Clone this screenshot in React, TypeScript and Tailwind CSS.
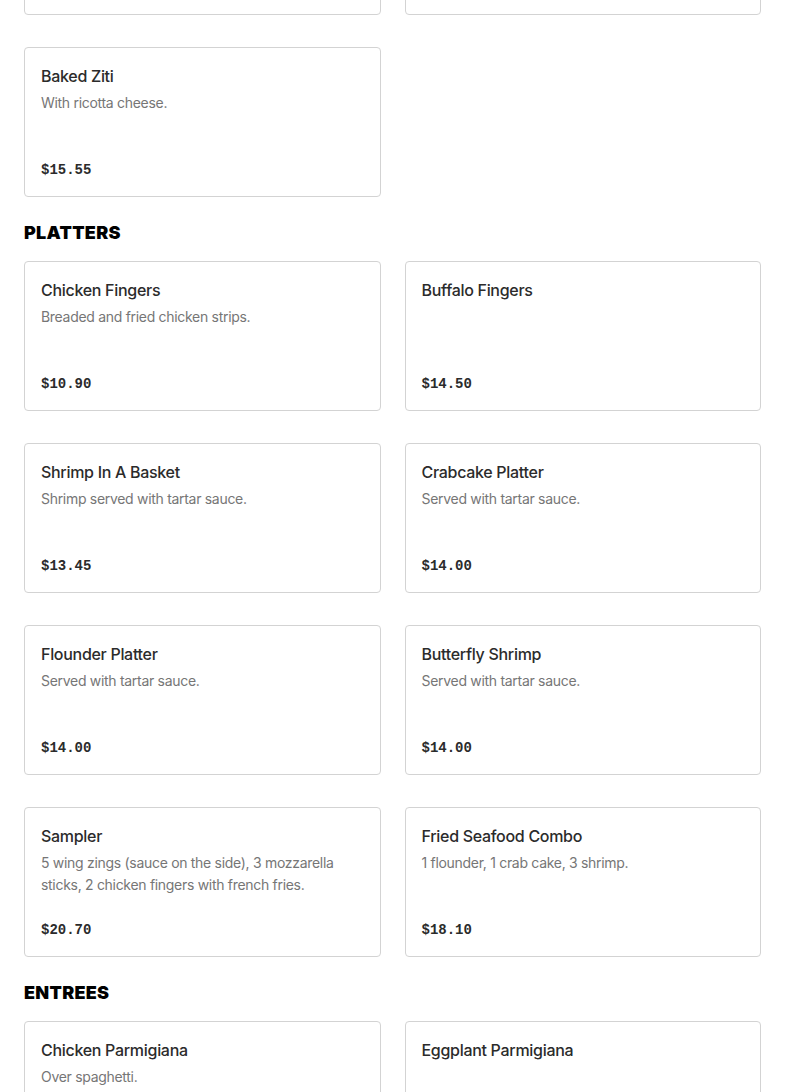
type Item = { name: string; desc?: string; price: string };

const pastaTail: Item[] = [
  { name: "Baked Ziti", desc: "With ricotta cheese.", price: "$15.55" },
];

const platters: Item[] = [
  { name: "Chicken Fingers", desc: "Breaded and fried chicken strips.", price: "$10.90" },
  { name: "Buffalo Fingers", price: "$14.50" },
  { name: "Shrimp In A Basket", desc: "Shrimp served with tartar sauce.", price: "$13.45" },
  { name: "Crabcake Platter", desc: "Served with tartar sauce.", price: "$14.00" },
  { name: "Flounder Platter", desc: "Served with tartar sauce.", price: "$14.00" },
  { name: "Butterfly Shrimp", desc: "Served with tartar sauce.", price: "$14.00" },
  {
    name: "Sampler",
    desc: "5 wing zings (sauce on the side), 3 mozzarella sticks, 2 chicken fingers with french fries.",
    price: "$20.70",
  },
  { name: "Fried Seafood Combo", desc: "1 flounder, 1 crab cake, 3 shrimp.", price: "$18.10" },
];

const entrees: Item[] = [
  { name: "Chicken Parmigiana", desc: "Over spaghetti.", price: "$16.95" },
  { name: "Eggplant Parmigiana", price: "$15.95" },
];

const cardBox = "h-[150px] rounded-[4px] border border-[#d3d3d3] bg-white";

function MenuCard({ item }: { item: Item }) {
  return (
    <div className={`flex flex-col justify-between p-4 ${cardBox}`}>
      <div>
        <h3 className="font-['Inter',sans-serif] text-base leading-6 font-medium tracking-[-0.3px] text-[#2b2b2b]">
          {item.name}
        </h3>
        {item.desc && (
          <p className="mt-1 font-['Inter',sans-serif] text-sm leading-[22px] tracking-[-0.3px] text-[#767676]">
            {item.desc}
          </p>
        )}
      </div>
      <p className="-mb-px font-['Liberation_Mono',monospace] text-sm leading-[22px] font-bold text-[#2b2b2b]">
        {item.price}
      </p>
    </div>
  );
}

function Grid({ items }: { items: Item[] }) {
  return (
    <div className="grid grid-cols-2 gap-x-6 gap-y-8">
      {items.map((item) => (
        <MenuCard key={item.name} item={item} />
      ))}
    </div>
  );
}

function SectionTitle({ children }: { children: string }) {
  return (
    <h2 className="mt-[22px] mb-[14px] font-['Inter',sans-serif] text-lg leading-7 font-black tracking-[0.3px] text-black">
      {children}
    </h2>
  );
}

export default function App() {
  return (
    <div className="min-h-screen overflow-hidden bg-white px-6">
      {/* last row of the previous section, scrolled mostly out of view */}
      <div className="mt-[-135px] grid grid-cols-2 gap-x-6">
        <div className={cardBox} />
        <div className={cardBox} />
      </div>
      <div className="mt-8">
        <Grid items={pastaTail} />
      </div>
      <SectionTitle>PLATTERS</SectionTitle>
      <Grid items={platters} />
      <SectionTitle>ENTREES</SectionTitle>
      <Grid items={entrees} />
    </div>
  );
}
